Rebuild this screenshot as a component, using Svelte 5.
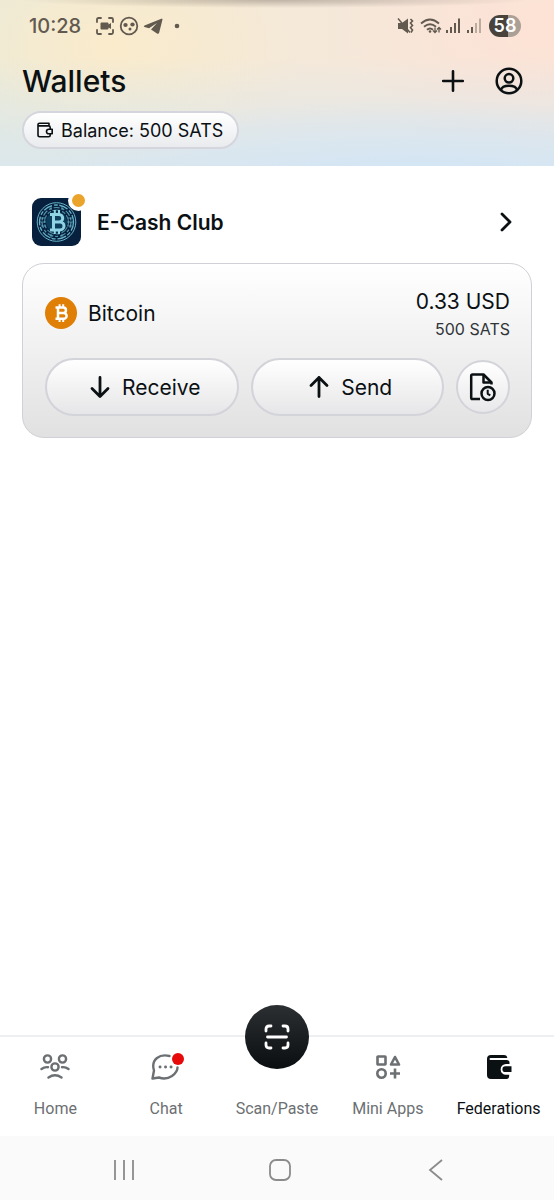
<script lang="ts">
	type Tab = { id: string; label: string };

	const tabs: Tab[] = [
		{ id: 'home', label: 'Home' },
		{ id: 'chat', label: 'Chat' },
		{ id: 'scan', label: 'Scan/Paste' },
		{ id: 'apps', label: 'Mini Apps' },
		{ id: 'federations', label: 'Federations' }
	];

	const wallet = { name: 'Bitcoin', fiat: '0.33 USD', sats: '500 SATS' };

	let active = $state('federations');
</script>

<div class="app">
	<header class="top">
		<div class="status">
			<span class="clock">10:28</span>
			<svg class="notif" width="86" height="20" viewBox="0 0 86 20" aria-hidden="true">
				<g fill="none" stroke="currentColor" stroke-width="1.8" stroke-linecap="round">
					<path d="M2 6V3.500Q2 2 3.500 2H6M14 2h2.500Q18 2 18 3.500V6M18 14v2.500Q18 18 16.500 18H14M6 18H3.500Q2 18 2 16.500V14" />
					<circle cx="34" cy="10" r="8.300" />
				</g>
				<g fill="currentColor">
					<path d="M6.500 6.500h6q1 0 1 1v1L16 7v6l-2.500-1.500v1q0 1-1 1h-6q-1 0-1-1v-5q0-1 1-1z" />
					<ellipse cx="30.500" cy="9" rx="2.200" ry="2" />
					<ellipse cx="37.500" cy="8.500" rx="2.200" ry="2" />
					<circle cx="35" cy="13" r="1.500" />
					<path d="M67 2.500L49.500 9.500q-1.500 1 0 1.500l4.500 1.200L62 7l-6 6.500 6 4q1.700 1 2.200-1L67.500 3.500z" />
					<circle cx="82" cy="10" r="2.300" />
				</g>
			</svg>
			<svg class="signals" width="88" height="20" viewBox="0 0 88 20" aria-hidden="true">
				<path d="M2 7h4l6-4.500v15L6 13H2z" fill="currentColor" />
				<g fill="none" stroke="currentColor" stroke-width="1.500">
					<path d="M14.500 3l2 2-2 2 2 2.500-2 2 2 2.500-1.500 2.500" stroke-width="1.600" />
					<path d="M2 2.500l12 14" />
					<path d="M25 7.500q9-8 18 0M28 10.800q6-5 12 0M31 13.800q3-2.500 6 0" stroke-width="1.900" />
					<path d="M39 11.500v5m-2-2l2 2 2-2M43 16.500v-5m-2 2l2-2 2 2" stroke-width="1.300" />
				</g>
				<circle cx="34" cy="15.500" r="1.300" fill="currentColor" />
				<g stroke="currentColor" stroke-width="2">
					<path d="M51 17v-3M55 17v-6M59 17V7M63 17V2.500M72 17v-3M76 17v-6" />
					<path d="M80 17V7M84 17V2.500" opacity="0.4" />
				</g>
			</svg>
			<span class="battery">58</span>
		</div>

		<div class="title-row">
			<h1>Wallets</h1>
			<button class="icon-btn" aria-label="Add">
				<svg width="24" height="24" viewBox="0 0 24 24" fill="none" stroke="currentColor" stroke-width="2.600" stroke-linecap="round">
					<path d="M12 2.200v19.600M2.200 12h19.600" />
				</svg>
			</button>
			<button class="icon-btn" aria-label="Profile">
				<svg width="28" height="28" viewBox="0 0 28 28" fill="none" stroke="currentColor" stroke-width="2.500">
					<circle cx="14" cy="14" r="12.300" />
					<circle cx="14" cy="11.300" r="4.300" />
					<path d="M6 23q1-4.300 8-4.300t8 4.300" />
				</svg>
			</button>
		</div>

		<button class="balance">
			<svg width="16" height="16" viewBox="0 0 16 16" fill="none" stroke="currentColor" stroke-width="1.600" stroke-linejoin="round">
				<path d="M12 3.500V1.200H2.500Q1 1.200 1 2.500V13Q1 14.700 2.700 14.700H11.500Q13.200 14.700 13.200 13V12M1.200 3.900H11.600Q13.200 3.900 13.200 5.500V7" />
				<path d="M15.200 7.200v4.600h-3.400a2.300 2.300 0 0 1 0-4.600z" />
			</svg>
			Balance: 500 SATS
		</button>
	</header>

	<main>
		<a class="club" href="#club">
			<span class="club-logo">
				<svg width="49" height="48" viewBox="0 0 49 48" aria-hidden="true">
					<rect width="49" height="48" rx="9" fill="#06203d" />
					<g fill="none" stroke="#68b3c9">
						<circle cx="24.500" cy="24" r="19.300" stroke-width="1" />
						<circle cx="24.500" cy="24" r="17" stroke-width="1.300" stroke-dasharray="9 2 4 1.500" />
						<circle cx="24.500" cy="24" r="14.500" stroke-width="1.200" stroke-dasharray="6 2 3 2" opacity="0.800" />
						<circle cx="24.500" cy="24" r="12" stroke-width="1.200" stroke-dasharray="4 1.500 8 2" opacity="0.700" />
						<path d="M8 20h5m-5 4h6m-5 4h5M36 20h5m-6 4h6m-6 4h5M19 8v4m11-4v4M19 36v4m11-4v4" opacity="0.700" />
					</g>
					<circle cx="24.500" cy="24" r="10.500" fill="#0c3d5a" />
					<g fill="none" stroke="#8fd3e4" stroke-width="3">
						<path d="M18 16.500h9a3.700 3.700 0 0 1 0 7.400H21h7a4 4 0 0 1 0 8H18M21.500 16.500v15" />
						<path d="M22.800 12v4M27 12v4M22.800 32v4M27 32v4" stroke-width="2" />
					</g>
				</svg>
				<span class="club-dot"></span>
			</span>
			<span class="club-name">E-Cash Club</span>
			<svg width="12" height="20" viewBox="0 0 12 20" fill="none" stroke="currentColor" stroke-width="2.800" stroke-linecap="round" stroke-linejoin="round" aria-hidden="true">
				<path d="M2 2l8 8-8 8" />
			</svg>
		</a>

		<section class="card">
			<div class="asset">
				<svg width="32" height="32" viewBox="0 0 32 32" aria-hidden="true">
					<circle cx="16" cy="16" r="16" fill="#df7f06" />
					<g fill="none" stroke="#fff" stroke-width="2.500">
						<path d="M10.500 10.500h7.700a2.700 2.700 0 0 1 0 5.500H13h5.700a2.900 2.900 0 0 1 0 5.800H10.500M13 10.500v11.300" />
						<path d="M14.600 7.200v3M18.200 7.200v3M14.600 22v3M18.200 22v3" stroke-width="2" />
					</g>
				</svg>
				<span class="asset-name">{wallet.name}</span>
				<div class="amounts">
					<span class="fiat">{wallet.fiat}</span>
					<span class="sats">{wallet.sats}</span>
				</div>
			</div>
			<div class="actions">
				<button class="pill">
					<svg width="22" height="24" viewBox="0 0 22 24" fill="none" stroke="currentColor" stroke-width="2.800" stroke-linecap="round" stroke-linejoin="round">
						<path d="M11 2.500v19M3 13.500l8 8 8-8" />
					</svg>
					Receive
				</button>
				<button class="pill">
					<svg width="22" height="24" viewBox="0 0 22 24" fill="none" stroke="currentColor" stroke-width="2.800" stroke-linecap="round" stroke-linejoin="round">
						<path d="M11 21.500v-19M3 10.500l8-8 8 8" />
					</svg>
					Send
				</button>
				<button class="history" aria-label="Transaction history">
					<svg width="28" height="30" viewBox="0 0 28 30" fill="none" stroke="currentColor" stroke-width="2.500" stroke-linejoin="round">
						<path d="M11 27H3.500Q2.200 27 2.200 25.700V3.800Q2.200 2.500 3.500 2.500H14.500L22.500 10.500V12.500" />
						<path d="M14.500 3v7.500h8" />
						<circle cx="19" cy="21.500" r="6.500" />
						<path d="M18.700 17.800v4l2.600 1.500" stroke-width="2" />
					</svg>
				</button>
			</div>
		</section>
	</main>

	<nav class="tabs">
		{#each tabs as tab (tab.id)}
			<button class="tab" class:on={active === tab.id} onclick={() => (active = tab.id)}>
				<span class="tab-icon" class:scan={tab.id === 'scan'}>
					{#if tab.id === 'home'}
						<svg width="30" height="26" viewBox="0 0 30 26" fill="none" stroke="currentColor" stroke-width="2.400" stroke-linecap="round">
							<circle cx="7.500" cy="5" r="3.600" />
							<circle cx="22.500" cy="5" r="3.600" />
							<circle cx="15" cy="13" r="3.600" />
							<path d="M1.500 15q3-2.300 6.500-1.800M28.500 15q-3-2.300-6.500-1.800M8.500 23.500q6.500-4.500 13 0" />
						</svg>
					{:else if tab.id === 'chat'}
						<svg width="30" height="28" viewBox="0 0 30 28" fill="none" stroke="currentColor" stroke-width="2.400" stroke-linecap="round" stroke-linejoin="round">
							<path d="M18.500 3Q11 1 6 5 0.500 9.500 3 17.500L1.500 25.500L8 24.500Q15 27 21 23Q26.500 19 26.500 14.500" />
							<path d="M9 14h.1M14.500 14h.1M20 14h.1" stroke-width="2.900" />
						</svg>
						<span class="unread"></span>
					{:else if tab.id === 'scan'}
						<svg width="28" height="28" viewBox="0 0 28 28" fill="none" stroke="currentColor" stroke-width="2.800" stroke-linecap="round">
							<path d="M3 8V6q0-3 3-3h2M20 3h2q3 0 3 3v2M25 20v2q0 3-3 3h-2M8 25H6q-3 0-3-3v-2M4.500 14h19" />
						</svg>
					{:else if tab.id === 'apps'}
						<svg width="26" height="26" viewBox="0 0 26 26" fill="none" stroke="currentColor" stroke-width="2.600" stroke-linejoin="round">
							<rect x="2.500" y="2.500" width="8" height="8" rx="0.500" />
							<path d="M20 3l4 7.500h-8z" />
							<circle cx="6.500" cy="19.500" r="4.200" />
							<path d="M20 14.500v10M15 19.500h10" />
						</svg>
					{:else}
						<svg width="26" height="26" viewBox="0 0 26 26" fill="currentColor">
							<path fill-rule="evenodd" d="M5 1h13q3 0 3.300 3H4.500a1 1 0 0 0 0 2H20.500q3 0 3 2.500V10H20a5.400 5.400 0 0 0 0 10.800h3.200V22Q23 25 20.500 25H5Q1 25 1 21V5Q1 1 5 1z" />
							<path d="M19.300 12.300H25.500V18H19.300a2.850 2.850 0 0 1 0-5.700z" />
						</svg>
					{/if}
				</span>
				<span class="tab-label">{tab.label}</span>
			</button>
		{/each}
	</nav>

	<div class="system">
		<button aria-label="Recent apps">
			<svg width="24" height="24" viewBox="0 0 24 24" fill="none" stroke="currentColor" stroke-width="1.800">
				<path d="M4 2v20M13 2v20M22 2v20" />
			</svg>
		</button>
		<button aria-label="Home screen">
			<svg width="24" height="24" viewBox="0 0 24 24" fill="none" stroke="currentColor" stroke-width="1.800">
				<rect x="2" y="2" width="20" height="20" rx="6" />
			</svg>
		</button>
		<button aria-label="Back">
			<svg width="24" height="24" viewBox="0 0 24 24" fill="none" stroke="currentColor" stroke-width="1.800">
				<path d="M17 2L5 12l12 10" />
			</svg>
		</button>
	</div>
</div>

<style>
	:global(body) {
		margin: 0;
	}
	.app {
		min-height: 100vh;
		display: flex;
		flex-direction: column;
		background: #fff;
		color: #0b1013;
		font-family: Inter, 'Liberation Sans', sans-serif;
	}
	button {
		font: inherit;
		color: inherit;
		background: none;
		border: 0;
		padding: 0;
		cursor: pointer;
	}
	svg {
		display: block;
		flex-shrink: 0;
	}

	/* HEADER */
	.top {
		padding: 0 22px 17px;
		background:
			radial-gradient(ellipse 46% 8px at 50% 0, rgba(90, 80, 70, 0.35), transparent),
			radial-gradient(ellipse 70% 50% at 75% 110%, #d2e5f6, transparent),
			linear-gradient(180deg, transparent 35%, rgba(218, 231, 238, 0.9) 100%),
			radial-gradient(ellipse 35% 70% at 20% 28%, #faebcb, transparent),
			radial-gradient(ellipse 40% 80% at 100% 15%, #fde2d5, transparent),
			linear-gradient(90deg, #e9ead9, #f4e9d9 40%, #f6e7db);
	}
	.status {
		display: flex;
		align-items: center;
		height: 52px;
		color: #62594f;
	}
	.clock {
		margin-left: 7px;
		width: 66px;
		font-size: 20px;
		font-weight: 500;
	}
	.signals {
		margin-left: auto;
	}
	.battery {
		margin: 0 11px 0 5px;
		width: 32px;
		border-radius: 11px;
		background: linear-gradient(90deg, #49433b 58%, #aba096 58%);
		color: #fff;
		font-size: 18px;
		font-weight: 600;
		line-height: 22px;
		text-align: center;
	}
	.title-row {
		display: flex;
		align-items: center;
		height: 58px;
		margin-bottom: 1px;
		padding-right: 9px;
		gap: 30px;
	}
	h1 {
		margin: 0 auto 0 0;
		font-size: 30px;
		line-height: 32px;
		font-weight: 500;
	}
	.balance {
		display: flex;
		align-items: center;
		gap: 8px;
		height: 38px;
		padding: 0 14px 0 13px;
		border: 2px solid #d5d6dd;
		border-radius: 19px;
		background: linear-gradient(#fff, #e9ebee);
		font-size: 18px;
	}

	/* WALLET LIST */
	main {
		flex: 1;
		padding: 32px 22px;
	}
	.club {
		display: flex;
		align-items: center;
		gap: 16px;
		padding: 0 20px 0 10px;
		margin-bottom: 17px;
		color: inherit;
		text-decoration: none;
	}
	.club-logo {
		position: relative;
	}
	.club-dot {
		position: absolute;
		top: -8px;
		right: -8px;
		width: 13px;
		height: 13px;
		border: 4px solid #fff;
		border-radius: 50%;
		background: #eaa42c;
	}
	.club-name {
		flex: 1;
		font-size: 21px;
		font-weight: 600;
	}
	.card {
		padding: 22px 21px 21px 22px;
		border: 1px solid #d0d0d6;
		border-radius: 22px;
		background: linear-gradient(#fff, #e1e1e2);
	}
	.asset {
		display: flex;
		align-items: center;
		gap: 11px;
		margin-bottom: 18px;
	}
	.asset-name {
		flex: 1;
		font-size: 21px;
	}
	.amounts {
		display: flex;
		flex-direction: column;
		align-items: flex-end;
	}
	.fiat {
		font-size: 21px;
		line-height: 32px;
	}
	.sats {
		font-size: 16px;
		line-height: 22px;
		color: #303438;
	}
	.actions {
		display: flex;
		align-items: center;
		gap: 12px;
	}
	.pill {
		flex: 1;
		display: flex;
		align-items: center;
		justify-content: center;
		gap: 11px;
		height: 58px;
		padding-left: 6px;
		border: 2px solid #d3d3da;
		border-radius: 29px;
		background: linear-gradient(#fff, #e6e6e8);
		font-size: 21px;
	}
	.history {
		display: grid;
		place-items: center;
		width: 54px;
		height: 54px;
		border: 2px solid #d3d3da;
		border-radius: 50%;
		background: linear-gradient(#fff, #e8e8ea);
	}

	/* TAB BAR */
	.tabs {
		display: grid;
		grid-template-columns: repeat(5, 1fr);
		height: 99px;
		border-top: 2px solid #eeeff0;
		font-family: Roboto, 'Liberation Sans', sans-serif;
	}
	.tab {
		display: flex;
		flex-direction: column;
		align-items: center;
		color: #6c7073;
	}
	.tab.on {
		color: #0b1013;
	}
	.tab-icon {
		position: relative;
		display: grid;
		place-items: center;
		height: 60px;
	}
	.tab-icon.scan {
		width: 64px;
		height: 64px;
		margin: -32px 0 28px;
		border-radius: 50%;
		background: linear-gradient(#2b2f32, #0a0e11);
		color: #fff;
	}
	.unread {
		position: absolute;
		top: 16px;
		right: -3px;
		width: 12px;
		height: 12px;
		border-radius: 50%;
		background: #e60a0a;
	}
	.tab-label {
		font-size: 16px;
		line-height: 24px;
	}

	/* SYSTEM NAVIGATION */
	.system {
		box-sizing: border-box;
		display: flex;
		justify-content: space-between;
		align-items: center;
		height: 64px;
		padding: 4px 19% 0 20%;
		background: #fafafa;
		color: #8b8b8b;
	}
</style>
